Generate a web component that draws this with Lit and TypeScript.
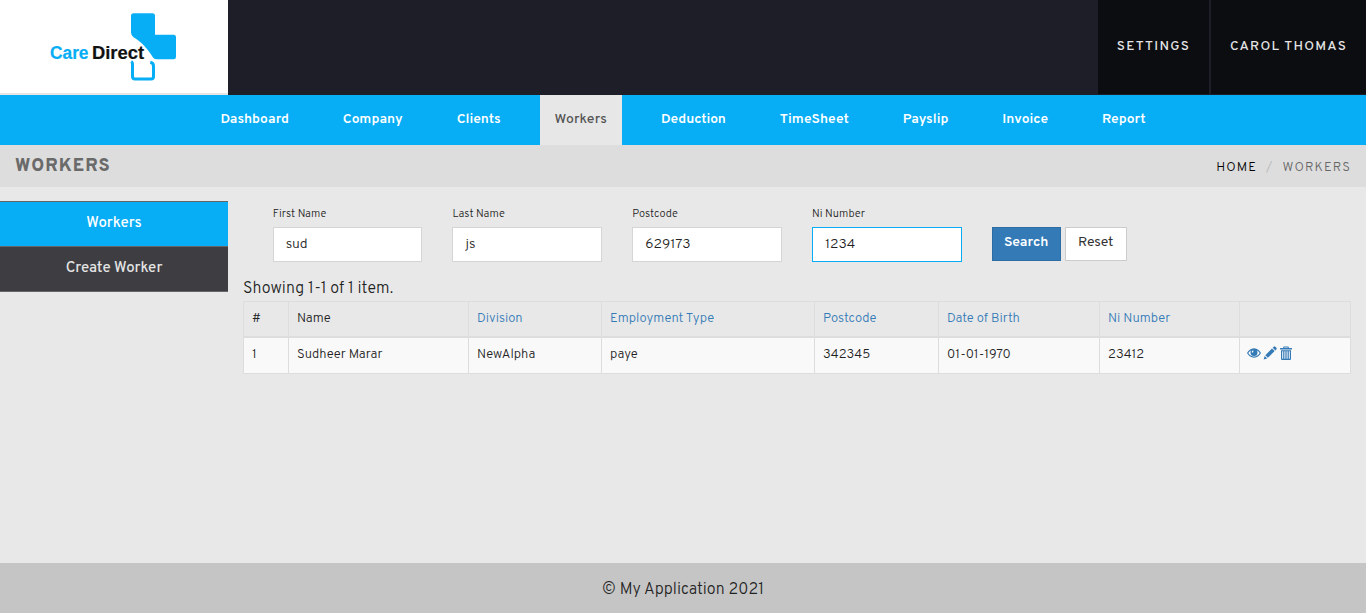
import { LitElement, html, css } from "lit";
import { customElement } from "lit/decorators.js";
import { classMap } from "lit/directives/class-map.js";

const NAV = ["Dashboard", "Company", "Clients", "Workers", "Deduction", "TimeSheet", "Payslip", "Invoice", "Report"];

const FIELDS = [
  { label: "First Name", value: "sud", focused: false },
  { label: "Last Name", value: "js", focused: false },
  { label: "Postcode", value: "629173", focused: false },
  { label: "Ni Number", value: "1234", focused: true },
];

const COLUMNS = [
  { title: "#", sortable: false },
  { title: "Name", sortable: false },
  { title: "Division", sortable: true },
  { title: "Employment Type", sortable: true },
  { title: "Postcode", sortable: true },
  { title: "Date of Birth", sortable: true },
  { title: "Ni Number", sortable: true },
  { title: "", sortable: false },
];

const ROW = ["1", "Sudheer Marar", "NewAlpha", "paye", "342345", "01-01-1970", "23412"];

@customElement("app-root")
export class AppRoot extends LitElement {
  static styles = css`
    :host {
      display: flex;
      flex-direction: column;
      height: 613px;
      box-sizing: border-box;
      background: #e8e8e8;
      color: #222;
      font: 300 13px/18px Overpass, Roboto, "Liberation Sans", sans-serif;
    }
    * { box-sizing: border-box; }
    a { color: inherit; text-decoration: none; }
    .header { display: flex; height: 95px; background: #1e1e28; }
    .logo { width: 228px; height: 95px; background: #fff; border-bottom: 2px solid #e6e6e6; }
    .logo svg { display: block; }
    .account { display: flex; margin-left: auto; height: 94px; gap: 2px; }
    .account a {
      display: flex; align-items: center; justify-content: center;
      background: #0c0d11; color: #e4e4e4; font-size: 13.5px; font-weight: 500; letter-spacing: 1.3px;
    }
    .settings { width: 111px; }
    .user { width: 155px; }
    .nav { display: flex; justify-content: center; gap: 24px; height: 50px; background: #08aef5; }
    .nav a {
      display: flex; align-items: center; padding: 0 15px 1px;
      color: #fff; font-size: 13.8px; font-weight: 600;
    }
    .nav a.active { background: #e7e7e7; color: #555; font-size: 14px; font-weight: 500; letter-spacing: 0.1px; }
    .titlebar {
      display: flex; align-items: center; justify-content: space-between;
      height: 42px; padding: 0 15px; background: #ddd;
    }
    h1 { margin: 0; padding-top: 1px; font-size: 18px; line-height: 24px; font-weight: 800; letter-spacing: 1px; color: #6a6a6a; }
    .crumbs { display: flex; padding-top: 4px; letter-spacing: 1.1px; color: #666; }
    .crumbs .home { color: #000; }
    .crumbs .sep { color: #b8b8b8; padding: 0 9px; }
    .main { display: flex; flex: 1; }
    .side { width: 228px; padding-top: 14px; }
    .side a {
      display: flex; align-items: center; justify-content: center; height: 45px;
      border-top: 1px solid #666; background: #3e3e42; color: #e4e4e4;
      font-size: 15px; font-weight: 500; padding-bottom: 1px;
    }
    .side a.active { background: #08aef5; color: #fff; }
    .side a:last-child { height: 46px; border-bottom: 1px solid #666; }
    .content { flex: 1; padding: 18px 15px 0; }
    .filters { display: flex; gap: 30px; padding-left: 29.7px; height: 57px; }
    .field { width: 149.75px; }
    .field label { display: block; font-size: 11px; line-height: 18px; letter-spacing: 0.05px; margin-bottom: 4px; }
    .field input {
      display: block; width: 100%; height: 35px; padding: 0 12px 1px; margin: 0;
      border: 1px solid #d5d5d5; border-radius: 0; background: #fff; color: #222;
      font: inherit; font-size: 14px; outline: none;
    }
    .field input.focused { border-color: #08aef5; }
    .buttons { display: flex; gap: 4px; padding-top: 22px; }
    .buttons button {
      height: 34px; padding: 0 0 2px; font: inherit; font-size: 14px; font-weight: 400; border-radius: 0;
      border: 1px solid #ccc; background: #fff; color: #333; width: 62px;
    }
    .buttons .primary { width: 69px; background: #337ab7; border-color: #2e6da4; color: #fff; font-weight: 600; }
    .summary { font-size: 16px; line-height: 24px; padding-top: 15px; height: 39px; margin: 0; letter-spacing: 0.04px; }
    .table {
      display: grid; grid-template-columns: 45px 180px 133px 213px 124px 161px 140px 111px;
      grid-template-rows: 37px 36px; border-left: 1px solid #ddd;
    }
    .cell { display: flex; align-items: center; padding: 0 8px 2px; border-right: 1px solid #ddd; border-bottom: 1px solid #ddd; background: #f9f9f9; }
    .head { padding-bottom: 0; border-top: 1px solid #ddd; border-bottom-width: 2px; background: none; }
    .sortable { color: #337ab7; }
    .icons { gap: 2px; color: #337ab7; padding: 0 0 5px 7.3px; }
    .icons svg { display: block; width: 14px; height: 14px; fill: currentColor; }
    .footer {
      display: flex; align-items: center; justify-content: center; height: 50px;
      padding-top: 3px; background: #c5c5c5; font-size: 16px; letter-spacing: 0.07px;
    }
  `;

  render() {
    return html`
      <header class="header">
        <a class="logo" href="#">
          <svg width="228" height="93" viewBox="0 0 228 93" aria-label="Care Direct">
            <path fill="#08aef5" d="M133.500 13.200H152.500Q155 13.200 155 15.700V34.700H173.500Q176 34.700 176 37.200V57Q176 59.300 173.500 59.300H156.500Q154 59.300 152.800 57.300C148 49 141 41.500 133.500 37.200Q131 35.500 131 32.500V15.700Q131 13.200 133.500 13.200Z" />
            <path fill="none" stroke="#08aef5" stroke-width="3" d="M131.200 61.500Q132.500 62.300 132.500 64V76.500Q132.500 79 135 79H151Q153.500 79 153.500 76.500V66Q153.500 63 150.300 62.200" />
            <g font-family="Liberation Sans, Arial, sans-serif" font-weight="700" font-size="18.800" stroke-width="0.200">
              <text x="50" y="59" fill="#08aef5" stroke="#08aef5" textLength="38.500" lengthAdjust="spacingAndGlyphs">Care</text>
              <text x="92" y="59" fill="#111" stroke="#111" textLength="52" lengthAdjust="spacingAndGlyphs">Direct</text>
            </g>
          </svg>
        </a>
        <div class="account">
          <a class="settings" href="#">SETTINGS</a>
          <a class="user" href="#">CAROL THOMAS</a>
        </div>
      </header>
      <nav class="nav">
        ${NAV.map((n) => html`<a href="#" class=${classMap({ active: n === "Workers" })}>${n}</a>`)}
      </nav>
      <div class="titlebar">
        <h1>WORKERS</h1>
        <div class="crumbs"><a class="home" href="#">HOME</a><span class="sep">/</span><span>WORKERS</span></div>
      </div>
      <div class="main">
        <aside class="side">
          <a class="active" href="#">Workers</a>
          <a href="#">Create Worker</a>
        </aside>
        <section class="content">
          <form class="filters">
            ${FIELDS.map((f) => html`
              <div class="field">
                <label>${f.label}</label>
                <input type="text" class=${classMap({ focused: f.focused })} .value=${f.value} />
              </div>`)}
            <div class="buttons">
              <button type="button" class="primary">Search</button>
              <button type="button">Reset</button>
            </div>
          </form>
          <p class="summary">Showing 1-1 of 1 item.</p>
          <div class="table">
            ${COLUMNS.map((c) => html`<div class=${classMap({ cell: true, head: true, sortable: c.sortable })}>${c.title}</div>`)}
            ${ROW.map((v) => html`<div class="cell">${v}</div>`)}
            <div class="cell icons">
              <svg viewBox="0 0 14 14"><path fill-rule="evenodd" d="M7 2.300C10.300 2.300 12.700 4.500 14 7C12.700 9.500 10.300 11.700 7 11.700S1.300 9.500 0 7C1.300 4.500 3.700 2.300 7 2.300ZM4.300 4.200C3 4.800 2 5.800 1.300 7C2.500 9.200 4.600 10.500 7 10.500S11.500 9.200 12.700 7C12 5.800 11 4.800 9.700 4.200C10.200 4.800 10.500 5.500 10.500 6.400A3.500 3.500 0 0 1 3.500 6.400C3.500 5.500 3.800 4.800 4.300 4.200ZM6.300 4.300A1.900 1.900 0 0 0 4.900 6.700L6.300 6.300Z" /></svg>
              <svg viewBox="0 0 14 14"><path d="M0.600 13.500L1.700 9.900L4.200 12.400ZM2.300 9.200L9 2.500L11.600 5.100L4.900 11.800ZM9.700 1.800L11 0.500Q11.500 0.100 12 0.500L13.600 2.100Q14 2.600 13.600 3.100L12.300 4.400Z" /></svg>
              <svg viewBox="0 0 14 14"><path fill-rule="evenodd" d="M5 0.500H9Q9.800 0.500 9.800 1.300V2H12.500Q13 2 13 2.500V3.500H1V2.500Q1 2 1.500 2H4.200V1.300Q4.200 0.500 5 0.500ZM5.200 1.500V2H8.800V1.500ZM2 4.300H12V13Q12 14 11 14H3Q2 14 2 13ZM3.200 5.300V12.700H4.200V5.300ZM5.400 5.300V12.700H6.400V5.300ZM7.600 5.300V12.700H8.600V5.300ZM9.800 5.300V12.700H10.800V5.300Z" /></svg>
            </div>
          </div>
        </section>
      </div>
      <footer class="footer">© My Application 2021</footer>
    `;
  }
}
